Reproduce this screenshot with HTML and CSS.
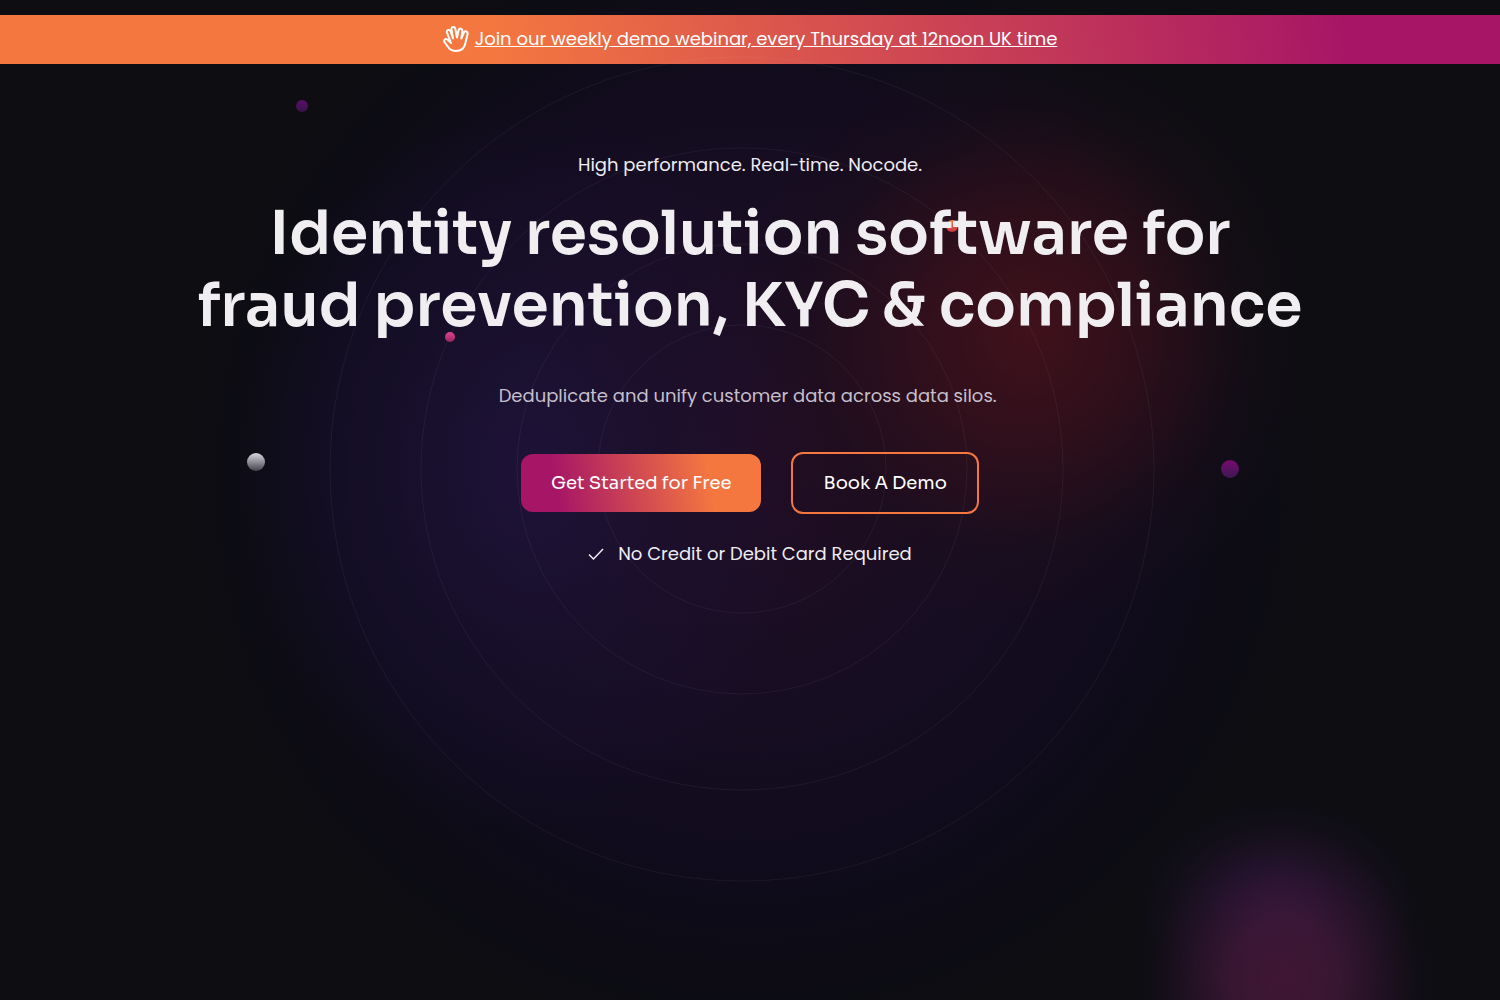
FILE: index.html
```html
<!DOCTYPE html>
<html lang="en">
<head>
<meta charset="utf-8">
<meta name="viewport" content="width=device-width, initial-scale=1">
<title>Identity resolution software</title>
<link rel="stylesheet" href="styles.css">
</head>
<body>
<div class="banner">
  <svg class="banner-icon" viewBox="0 0 26 26" aria-hidden="true">
    <path d="M8 17 4.300 13.600C2.400 12 .3 14 1.500 16L4.500 20.300C6.500 23.500 9 25 12.800 25c5.200 0 8.600-2.800 9.500-7.500L24.600 8c.6-2.700-2.900-3.700-3.800-1.200L18.300 12.500 19.400 5c.3-2.700-3.200-3.300-3.800-.7L14 11.500 12.300 2.600C11.700.1 8.200.7 8.500 3.200L10 12.500 7.600 5.400C6.700 3 3.300 3.900 3.900 6.500L8 17"/>
  </svg>
  <a class="banner-link" href="#webinar">Join our weekly demo webinar, every Thursday at 12noon UK time</a>
</div>
<main class="hero">
  <svg class="orbits" viewBox="0 0 1000 940" aria-hidden="true">
    <defs>
      <linearGradient id="grey" x2="0" y2="1"><stop stop-color="#d9d7e0"/><stop offset="1" stop-color="#45424f"/></linearGradient>
      <linearGradient id="violet" x2="0" y2="1"><stop stop-color="#780b70"/><stop offset="1" stop-color="#3c1852"/></linearGradient>
      <linearGradient id="plum" x2="0" y2="1"><stop stop-color="#5a0c68"/><stop offset="1" stop-color="#38154c"/></linearGradient>
      <linearGradient id="pink" x2="0" y2="1"><stop stop-color="#e04490"/><stop offset="1" stop-color="#98265f"/></linearGradient>
      <linearGradient id="coral" x2="0" y2="1"><stop stop-color="#f87a45"/><stop offset="1" stop-color="#c93642"/></linearGradient>
    </defs>
    <g class="rings">
      <circle cx="492" cy="405" r="144"/>
      <circle cx="492" cy="405" r="225"/>
      <circle cx="492" cy="405" r="321"/>
      <circle cx="492" cy="405" r="412"/>
    </g>
    <circle cx="52" cy="42" r="6" fill="url(#plum)"/>
    <circle cx="200" cy="273" r="5" fill="url(#pink)"/>
    <circle cx="6" cy="398" r="9" fill="url(#grey)"/>
    <circle cx="702" cy="162" r="6" fill="url(#coral)"/>
    <circle cx="980" cy="405" r="9" fill="url(#violet)"/>
  </svg>
  <div class="hero-content">
    <p class="eyebrow">High performance. Real-time. Nocode.</p>
    <h1 class="title">Identity resolution software for<br>fraud prevention, KYC &amp; compliance</h1>
    <p class="lead">Deduplicate and unify customer data across data silos.&nbsp;</p>
    <div class="actions">
      <button type="button" class="btn btn-primary">Get Started for Free</button>
      <button type="button" class="btn btn-outline">Book A Demo</button>
    </div>
    <p class="note">
      <svg class="check" viewBox="0 0 16 12" aria-hidden="true"><path d="M1 6.500 5.500 11 15 1"/></svg>
      <span>No Credit or Debit Card Required</span>
    </p>
  </div>
</main>
</body>
</html>
```
FILE: styles.css
```css
* { box-sizing: border-box; }

body {
  margin: 0;
  padding-top: 15px;
  min-height: 100vh;
  display: flex;
  flex-direction: column;
  overflow: hidden;
  color: #eeecf3;
  font: 18px/28px Poppins, Inter, "Open Sans", sans-serif;
  background:
    radial-gradient(155px 175px at calc(50% + 535px) 980px, #461838e0 0%, #401838d0 35%, #2c142d90 65%, #1b111d40 85%, transparent 100%),
    radial-gradient(140px 100px at calc(50% + 525px) 900px, #34186090 0%, #24143c50 50%, transparent 100%),
    radial-gradient(290px 300px at calc(50% + 280px) 330px, #4a121ad0 0%, #3c1118a0 40%, #220f1740 75%, transparent 100%),
    radial-gradient(300px 360px at calc(50% - 220px) 470px, #201541b0 0%, #1b123680 45%, transparent 100%),
    radial-gradient(480px 480px at 50% 450px, #260d23e0 0%, #1c0e26b0 50%, transparent 100%),
    radial-gradient(560px 560px at 50% 480px, #0d0b1a 70%, transparent 100%),
    #0d0d12;
}

.banner {
  display: flex;
  align-items: center;
  justify-content: center;
  gap: 6px;
  min-height: 49px;
  padding: 0 16px 2px;
  background: linear-gradient(80deg, #f47740 33%, #a61566 90%);
}

.banner-icon {
  flex: none;
  width: 26px;
  height: 26px;
  fill: none;
  stroke: #fff;
  stroke-width: 2;
  stroke-linecap: round;
  stroke-linejoin: round;
}

.banner-link {
  color: #fff;
  text-decoration: underline;
}

.hero {
  position: relative;
  flex: 1;
  padding: 87px 16px 0;
}

.orbits {
  position: absolute;
  top: 0;
  left: 50%;
  width: 1000px;
  height: 940px;
  margin-left: -500px;
  overflow: visible;
}

.rings {
  fill: none;
  stroke: #c8b4d2;
  stroke-opacity: .07;
}

.hero-content {
  position: relative;
  display: flex;
  flex-direction: column;
  align-items: center;
  text-align: center;
}

.eyebrow, .title, .lead, .note { margin: 0; }

.title {
  margin-top: 19px;
  font-family: Sora, Inter, "Open Sans", sans-serif;
  font-size: 60px;
  line-height: 72px;
  font-weight: 600;
  color: #f0eef0;
}

.lead {
  margin-top: 40px;
  color: #c5bfcb;
}

.actions {
  display: flex;
  flex-wrap: wrap;
  align-items: center;
  justify-content: center;
  gap: 30px;
  margin-top: 42px;
}

.btn {
  padding: 15px 30px;
  border: 0;
  border-radius: 12px;
  color: #fff;
  font: 500 18px/28px Sora, Inter, "Open Sans", sans-serif;
  cursor: pointer;
}

.btn-primary { background: linear-gradient(80deg, #a61566 15%, #f47740 78%); }

.btn-outline {
  border: 2px solid #f47740;
  background: transparent;
}

.note {
  display: flex;
  align-items: center;
  gap: 14px;
  margin-top: 26px;
}

.check {
  width: 16px;
  height: 12px;
  fill: none;
  stroke: currentColor;
  stroke-width: 1.500;
}
```
